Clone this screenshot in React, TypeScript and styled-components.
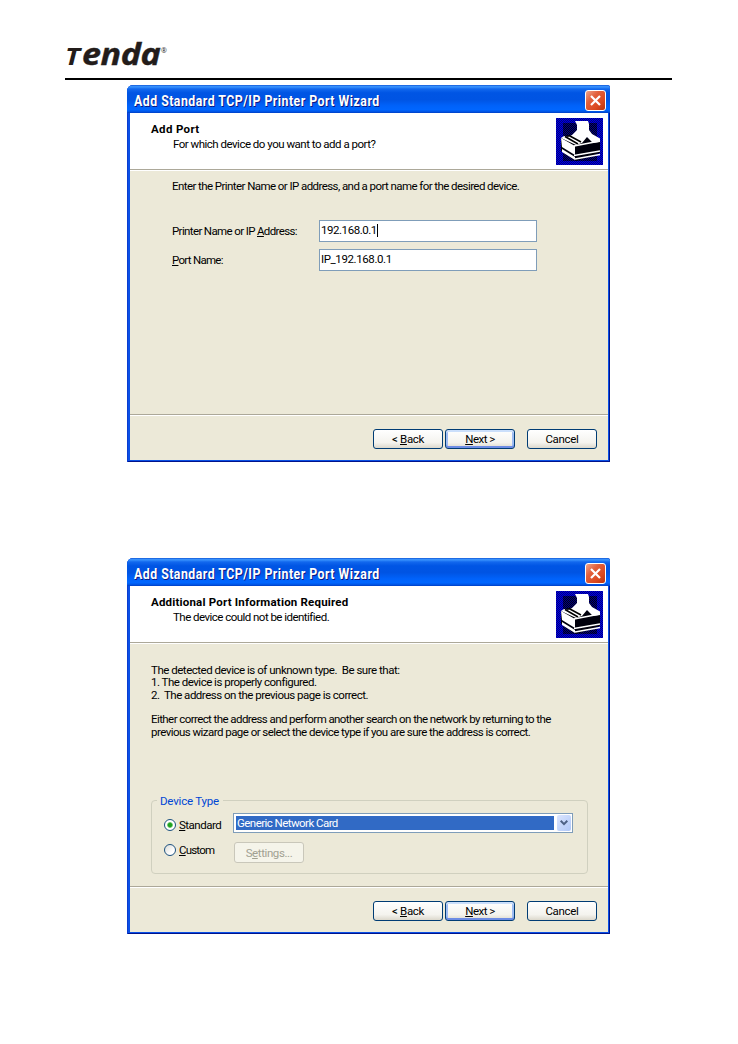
import { ReactNode } from 'react';
import styled, { createGlobalStyle, css } from 'styled-components';

const GlobalStyle = createGlobalStyle`
  body {
    margin: 0;
    background: #fff;
  }
  * {
    box-sizing: border-box;
  }
`;

const Page = styled.div`
  width: 738px;
  height: 1044px;
  padding: 38px 66px 0 65px;
  overflow: hidden;
  background: #fff;
  color: #000;
  font-family: Roboto, 'Liberation Sans', Arial, sans-serif;
  font-size: 11.5px;
`;

const PageHeader = styled.header`
  height: 42px;
  border-bottom: 2px solid #000;
`;

const Logo = styled.div`
  display: flex;
  align-items: baseline;
  height: 34px;
  color: #231c1a;
  font-family: 'Open Sans', sans-serif;
  font-weight: 700;
  font-style: italic;
  line-height: 31px;
`;

const LogoInitial = styled.span`
  width: 17px;
  font-size: 24px;
  transform: scaleX(1.18);
  transform-origin: left;
`;

const LogoRest = styled.span`
  width: 78px;
  font-size: 31px;
  letter-spacing: -0.4px;
  transform: scaleX(1.1);
  transform-origin: left;
  -webkit-text-stroke: 0.4px #231c1a;
`;

const LogoMark = styled.span`
  margin-left: 1px;
  font-size: 7px;
  font-style: normal;
  font-weight: 400;
  line-height: 7px;
  transform: translateY(-12px);
`;

const Window = styled.section<{ $top: number; $height: number }>`
  display: flex;
  flex-direction: column;
  width: 483px;
  height: ${({ $height }) => $height}px;
  margin: ${({ $top }) => $top}px 0 0 62px;
  padding: 0 2px 2px 3px;
  border-radius: 6px 3px 0 0;
  background: #0a50e6;
  box-shadow: inset 1px 0 0 #0a3cd0, inset -1px -1px 0 #00138c;
  overflow: hidden;
`;

const TitleBar = styled.div`
  display: flex;
  flex: none;
  justify-content: space-between;
  height: 28px;
  margin: 0 -2px 0 -3px;
  padding: 5px 4px 0 7px;
  background: linear-gradient(
    #1259d8 0%,
    #3c96ff 6%,
    #1268ee 14%,
    #0055e4 28%,
    #0054e3 52%,
    #0062fa 74%,
    #0066ff 88%,
    #0058ea 94%,
    #003ec4 100%
  );
`;

const Title = styled.div`
  color: #fff;
  font-size: 14px;
  font-weight: 700;
  line-height: 22px;
  letter-spacing: 0.55px;
  white-space: nowrap;
  text-shadow: 1px 1px 0 #0a1883;
  transform: scaleX(0.88);
  transform-origin: left;
`;

const CloseButton = styled.button`
  display: flex;
  align-items: center;
  justify-content: center;
  width: 21px;
  height: 21px;
  padding: 0;
  border: 1px solid #fff;
  border-radius: 3px;
  background: linear-gradient(135deg, #f0a58c 0%, #e2603c 35%, #dc4a20 70%, #b8330f 100%);
`;

const Header = styled.div`
  display: flex;
  flex: none;
  justify-content: space-between;
  height: 58px;
  padding: 5px 5px 0 21px;
  background: #fff;
  border-bottom: 1px solid #fff;
  box-shadow: inset 0 -1px 0 #aca899;
`;

const HeaderText = styled.div`
  padding-top: 5px;
`;

const Text = styled.div<{ $spacing?: number; $indent?: number; $bold?: boolean }>`
  padding-left: ${({ $indent = 0 }) => $indent}px;
  font-weight: ${({ $bold }) => ($bold ? 700 : 400)};
  line-height: 13px;
  letter-spacing: ${({ $spacing = -0.5 }) => $spacing}px;
  white-space: pre;
`;

const HeaderSubtitle = styled(Text)`
  margin-top: 2px;
`;

const Body = styled.div<{ $pad: string }>`
  flex: 1;
  padding: ${({ $pad }) => $pad};
  background: #ece9d8;
`;

const Footer = styled.div`
  display: flex;
  flex: none;
  align-items: flex-start;
  justify-content: flex-end;
  height: 46px;
  padding: 14px 11px 0 0;
  background: #ece9d8;
  border-top: 1px solid #aca899;
  box-shadow: inset 0 1px 0 #fff;
`;

const Button = styled.button<{ $primary?: boolean; $spacing?: number }>`
  width: 70px;
  height: 20px;
  margin-left: 2px;
  padding: 0;
  border: 1px solid #003c74;
  border-radius: 3px;
  background: linear-gradient(#fff, #f4f3ee 70%, #dcd8cc);
  color: #000;
  font: inherit;
  line-height: 18px;
  letter-spacing: ${({ $spacing = -0.3 }) => $spacing}px;

  &:last-child {
    margin-left: 12px;
  }

  ${({ $primary }) =>
    $primary &&
    css`
      box-shadow: inset 0 2px 0 #cbdffb, inset 0 -2px 0 #6d8ce4, inset 2px 0 0 #9ebcf2,
        inset -2px 0 0 #9ebcf2;
    `}
`;

const SettingsButton = styled.button`
  width: 70px;
  height: 21px;
  margin-left: 1px;
  padding: 0;
  border: 1px solid #c9c7ba;
  border-radius: 3px;
  background: #f5f4ea;
  color: #a1a192;
  font: inherit;
  line-height: 18px;
  letter-spacing: -0.4px;
`;

const Field = styled.label`
  display: flex;
  height: 22px;
  margin-bottom: 7px;
`;

const FieldLabel = styled(Text)`
  width: 147px;
  padding-top: 5px;
`;

const Input = styled.div<{ $spacing: number }>`
  display: flex;
  width: 218px;
  padding: 3px 0 0 1px;
  border: 1px solid #7f9db9;
  background: #fff;
  line-height: 13px;
  letter-spacing: ${({ $spacing }) => $spacing}px;
`;

const Caret = styled.i`
  width: 1px;
  height: 13px;
  background: #000;
`;

const Group = styled.fieldset`
  height: 80px;
  margin: 0;
  padding: 0;
  border: 0;
`;

const GroupFrame = styled.div`
  height: 74px;
  margin-top: -9px;
  padding: 12px 14px 0 12px;
  border: 1px solid #d0d0bf;
  border-radius: 4px;
`;

const GroupTitle = styled(Text)`
  position: relative;
  width: 66px;
  margin-left: 6px;
  padding-left: 3px;
  background: #ece9d8;
  color: #0046d5;
  line-height: 15px;
`;

const OptionRow = styled.div`
  display: flex;
  align-items: flex-start;
  height: 29px;
`;

const Option = styled.div<{ $top?: number }>`
  display: flex;
  align-items: center;
  gap: 3px;
  width: 69px;
  padding-top: ${({ $top = 0 }) => $top}px;

  ${Text} {
    padding-top: 2px;
  }
`;

const Radio = styled.span<{ $checked?: boolean }>`
  width: 12px;
  height: 12px;
  border: 1px solid #1c5180;
  border-radius: 50%;
  background: ${({ $checked }) =>
    $checked
      ? 'radial-gradient(circle, #21a121 0 1.8px, #7fd07f 2.6px, #fff 3.2px)'
      : 'linear-gradient(135deg, #dcdcd7, #fff 70%)'};
`;

const Combo = styled.div`
  display: flex;
  width: 340px;
  height: 20px;
  padding: 1px;
  border: 1px solid #7f9db9;
  background: #fff;
`;

const ComboValue = styled(Text)`
  width: 318px;
  height: 14px;
  margin: 1px 3px 0 1px;
  padding-left: 1px;
  background: #316ac5;
  color: #fff;
  line-height: 14px;
`;

const ComboArrow = styled.span`
  display: flex;
  align-items: center;
  justify-content: center;
  width: 14px;
  height: 16px;
  border-radius: 2px;
  background: linear-gradient(135deg, #dbe5fe, #b0c8f8);
`;

const CloseIcon = () => (
  <svg width="13" height="13" viewBox="0 0 13 13" stroke="#fff" strokeWidth="2.2">
    <path d="M2 2l9 9M11 2l-9 9" />
  </svg>
);

// every other pixel of the icon's ground is lighter
const ditherPath = (inRim: boolean) => {
  let d = '';
  for (let y = 0; y < 47; y += 1) {
    for (let x = 0; x < 47; x += 1) {
      const rim = x < 7 || x > 40 || y < 5 || y > 42;
      if (rim === inRim && (x + y) % 2 === 0) d += `M${x} ${y}h1v1h-1z`;
    }
  }
  return d;
};
const RIM_DITHER = ditherPath(true);
const CENTER_DITHER = ditherPath(false);

const PrinterIcon = () => (
  <svg width="47" height="47" viewBox="0 0 47 47" shapeRendering="crispEdges">
    <rect width="47" height="47" fill="#000080" />
    <rect x="7" y="5" width="34" height="38" fill="#000018" />
    <path d={RIM_DITHER} fill="#0000e0" />
    <path d={CENTER_DITHER} fill="#000080" />
    <g shapeRendering="auto">
      <path d="M5 20L12 17L44 21V35L20 43L5 33Z" fill="#00000c" />
      <path
        d="M19 3H32L33 6V12L36 16L44 20.5V24L37 25L31 19L26 25L20 27L5 20L8 18L12 19L16 17L21 12V7Z"
        fill="#fff"
      />
      <path d="M9 18.5L22 26M13 17.5L25 24" stroke="#000" strokeWidth="1.5" />
      <path d="M5 20L19 28V37L6 29ZM6 31L19 39V42L6 34Z" fill="#fff" />
      <path d="M18 28L44 23M18 37.5L44 33M19 41L44 36.5" stroke="#fff" strokeWidth="1.5" />
    </g>
  </svg>
);

const ArrowIcon = () => (
  <svg width="8" height="6" viewBox="0 0 8 6" fill="none" stroke="#4d6185" strokeWidth="2">
    <path d="M0.7 0.8L4 4.1L7.3 0.8" />
  </svg>
);

interface WizardProps {
  top: number;
  height: number;
  heading: string;
  headingSpacing: number;
  subtitle: string;
  subtitleSpacing: number;
  pad: string;
  children: ReactNode;
}

const Wizard = ({
  top,
  height,
  heading,
  headingSpacing,
  subtitle,
  subtitleSpacing,
  pad,
  children,
}: WizardProps) => (
  <Window $top={top} $height={height}>
    <TitleBar>
      <Title>Add Standard TCP/IP Printer Port Wizard</Title>
      <CloseButton aria-label="Close">
        <CloseIcon />
      </CloseButton>
    </TitleBar>
    <Header>
      <HeaderText>
        <Text $bold $spacing={headingSpacing}>{heading}</Text>
        <HeaderSubtitle $indent={22} $spacing={subtitleSpacing}>{subtitle}</HeaderSubtitle>
      </HeaderText>
      <PrinterIcon />
    </Header>
    <Body $pad={pad}>{children}</Body>
    <Footer>
      <Button>&lt; <u>B</u>ack</Button>
      <Button $primary $spacing={-0.5}><u>N</u>ext &gt;</Button>
      <Button>Cancel</Button>
    </Footer>
  </Window>
);

const FirstText = styled(Text)`
  margin-bottom: 27px;
`;

const Paragraph = styled.div<{ $gap: number }>`
  margin-bottom: ${({ $gap }) => $gap}px;

  ${Text} {
    line-height: 12.4px;
  }
`;

export default function App() {
  return (
    <Page>
      <GlobalStyle />
      <PageHeader>
        <Logo>
          <LogoInitial>T</LogoInitial>
          <LogoRest>enda</LogoRest>
          <LogoMark>®</LogoMark>
        </Logo>
      </PageHeader>
      <Wizard
        top={5}
        height={377}
        heading="Add Port"
        headingSpacing={0.35}
        subtitle="For which device do you want to add a port?"
        subtitleSpacing={-0.5}
        pad="9px 0 0 42px"
      >
        <FirstText $spacing={-0.57}>
          Enter the Printer Name or IP address, and a port name for the desired device.
        </FirstText>
        <Field>
          <FieldLabel $spacing={-0.63}>Printer Name or IP <u>A</u>ddress:</FieldLabel>
          <Input $spacing={-0.45}>192.168.0.1<Caret /></Input>
        </Field>
        <Field>
          <FieldLabel $spacing={-0.72}><u>P</u>ort Name:</FieldLabel>
          <Input $spacing={-0.4}>IP_192.168.0.1</Input>
        </Field>
      </Wizard>
      <Wizard
        top={96}
        height={376}
        heading="Additional Port Information Required"
        headingSpacing={0.19}
        subtitle="The device could not be identified."
        subtitleSpacing={-0.53}
        pad="20px 20px 0 21px"
      >
        <Paragraph $gap={12}>
          <Text $spacing={-0.48}>The detected device is of unknown type.  Be sure that:</Text>
          <Text>1. The device is properly configured.</Text>
          <Text>2.  The address on the previous page is correct.</Text>
        </Paragraph>
        <Paragraph $gap={56}>
          <Text $spacing={-0.58}>Either correct the address and perform another search on the network by returning to the</Text>
          <Text $spacing={-0.54}>previous wizard page or select the device type if you are sure the address is correct.</Text>
        </Paragraph>
        <Group>
          <GroupTitle $spacing={-0.2}>Device Type</GroupTitle>
          <GroupFrame>
            <OptionRow>
              <Option $top={4}>
                <Radio $checked />
                <Text><u>S</u>tandard</Text>
              </Option>
              <Combo>
                <ComboValue $spacing={-0.55}>Generic Network Card</ComboValue>
                <ComboArrow><ArrowIcon /></ComboArrow>
              </Combo>
            </OptionRow>
            <OptionRow>
              <Option>
                <Radio />
                <Text $spacing={-0.8}><u>C</u>ustom</Text>
              </Option>
              <SettingsButton>S<u>e</u>ttings...</SettingsButton>
            </OptionRow>
          </GroupFrame>
        </Group>
      </Wizard>
    </Page>
  );
}
